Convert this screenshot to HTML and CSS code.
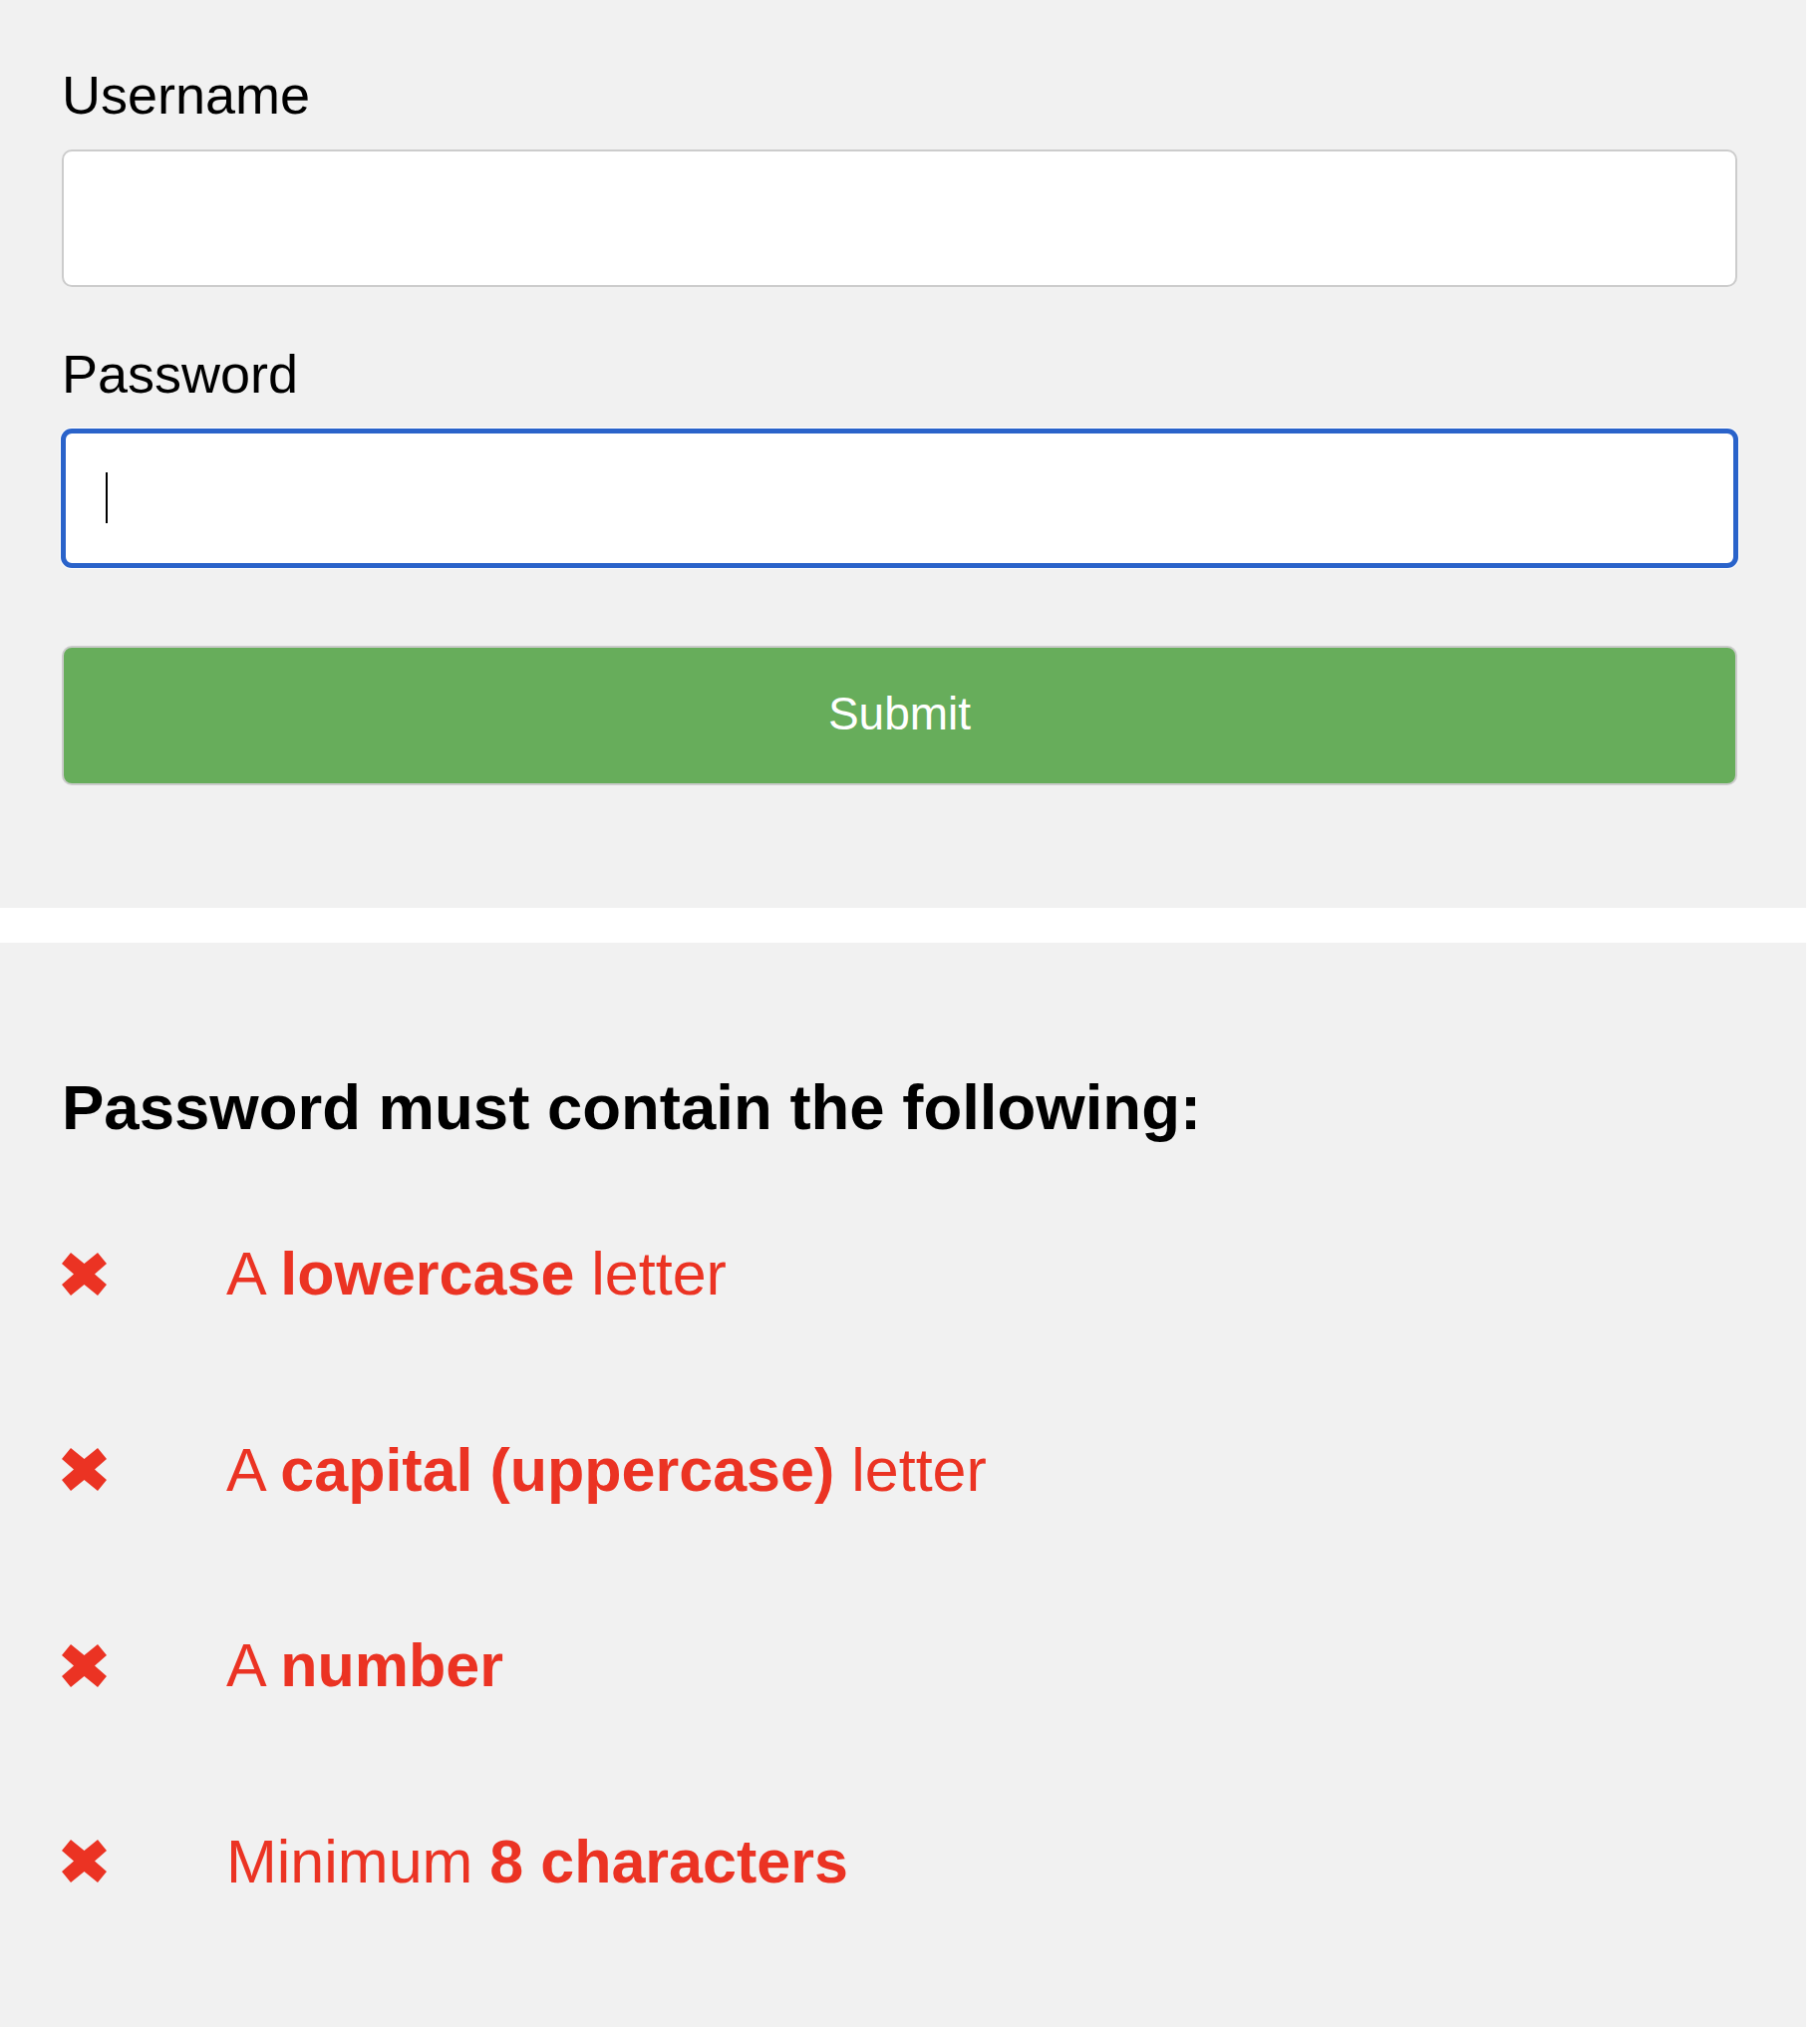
FILE: index.html
```html
<!DOCTYPE html>
<html lang="en">
<head>
<meta charset="utf-8">
<title>Password form</title>
<link rel="stylesheet" href="styles.css">
</head>
<body>
<div class="page">
  <form class="panel form-panel">
    <div class="field">
      <label class="label" for="username">Username</label>
      <input class="input" id="username" type="text">
    </div>
    <div class="field field-last">
      <label class="label" for="password">Password</label>
      <div class="input-wrap">
        <input class="input input-focus" id="password" type="password">
        <span class="caret"></span>
      </div>
    </div>
    <button class="submit" type="button">Submit</button>
  </form>

  <div class="panel rules-panel">
    <h3 class="rules-title">Password must contain the following:</h3>
    <ul class="rules">
      <li class="rule">
        <svg class="rule-icon" viewBox="0 0 45 43" width="45" height="43"><polygon points="0,11 9,0 22.5,11 36,0 45,11 33,21.5 45,32 36,43 22.5,32 9,43 0,32 12,21.5"/></svg>
        <span class="rule-text">A <b>lowercase</b> letter</span>
      </li>
      <li class="rule">
        <svg class="rule-icon" viewBox="0 0 45 43" width="45" height="43"><polygon points="0,11 9,0 22.5,11 36,0 45,11 33,21.5 45,32 36,43 22.5,32 9,43 0,32 12,21.5"/></svg>
        <span class="rule-text">A <b>capital (uppercase)</b> letter</span>
      </li>
      <li class="rule">
        <svg class="rule-icon" viewBox="0 0 45 43" width="45" height="43"><polygon points="0,11 9,0 22.5,11 36,0 45,11 33,21.5 45,32 36,43 22.5,32 9,43 0,32 12,21.5"/></svg>
        <span class="rule-text">A <b>number</b></span>
      </li>
      <li class="rule">
        <svg class="rule-icon" viewBox="0 0 45 43" width="45" height="43"><polygon points="0,11 9,0 22.5,11 36,0 45,11 33,21.5 45,32 36,43 22.5,32 9,43 0,32 12,21.5"/></svg>
        <span class="rule-text">Minimum <b>8 characters</b></span>
      </li>
    </ul>
  </div>
</div>
</body>
</html>
```

FILE: styles.css
```css
* {
  box-sizing: border-box;
}

html, body {
  margin: 0;
  padding: 0;
  background: #ffffff;
}

body {
  font-family: "Liberation Sans", Arial, Helvetica, sans-serif;
  color: #000000;
}

.page {
  width: 1812px;
  display: flex;
  flex-direction: column;
  gap: 35px;
}

.panel {
  background: #f1f1f1;
  padding-left: 62px;
  padding-right: 69px;
  margin: 0;
}

.form-panel {
  padding-top: 64px;
  padding-bottom: 123px;
  display: flex;
  flex-direction: column;
}

.field {
  display: flex;
  flex-direction: column;
  gap: 24px;
  margin-bottom: 56px;
}

.field-last {
  margin-bottom: 79px;
}

.label {
  display: block;
  font-size: 54px;
  line-height: 62px;
  color: #000;
}

.input-wrap {
  position: relative;
  margin-top: 1px;
}

.input {
  display: block;
  width: 100%;
  height: 138px;
  margin: 0;
  padding: 0 37px;
  background: #ffffff;
  border: 2px solid #cccccc;
  border-radius: 10px;
  font-family: inherit;
  font-size: 54px;
  outline: none;
}

.input-focus {
  border: 4px solid #2a63ca;
  box-shadow: 0 0 0 1px #2a63ca, 0 0 0 2px #ffffff;
}

.caret {
  position: absolute;
  left: 44px;
  top: 43px;
  width: 2px;
  height: 51px;
  background: #000;
}

.submit {
  display: flex;
  align-items: center;
  justify-content: center;
  width: 100%;
  height: 140px;
  margin: 0;
  padding: 0 0 4px;
  background: #67ad5b;
  border: 2px solid #cbcbcb;
  border-radius: 10px;
  color: #ffffff;
  font-family: inherit;
  font-size: 46px;
  cursor: pointer;
}

.rules-panel {
  padding-top: 128px;
  padding-bottom: 140px;
}

.rules-title {
  margin: 0 0 95px;
  font-size: 63.5px;
  line-height: 74px;
  font-weight: 700;
  color: #000;
}

.rules {
  list-style: none;
  margin: 0;
  padding: 0;
  display: flex;
  flex-direction: column;
  gap: 126.67px;
}

.rule {
  display: flex;
  align-items: center;
  gap: 120px;
  height: 70px;
  color: #eb3323;
  font-size: 61px;
  line-height: 70px;
}

.rule-icon {
  flex: none;
  fill: #eb3323;
}

.rule-text b {
  font-weight: 700;
}
```
